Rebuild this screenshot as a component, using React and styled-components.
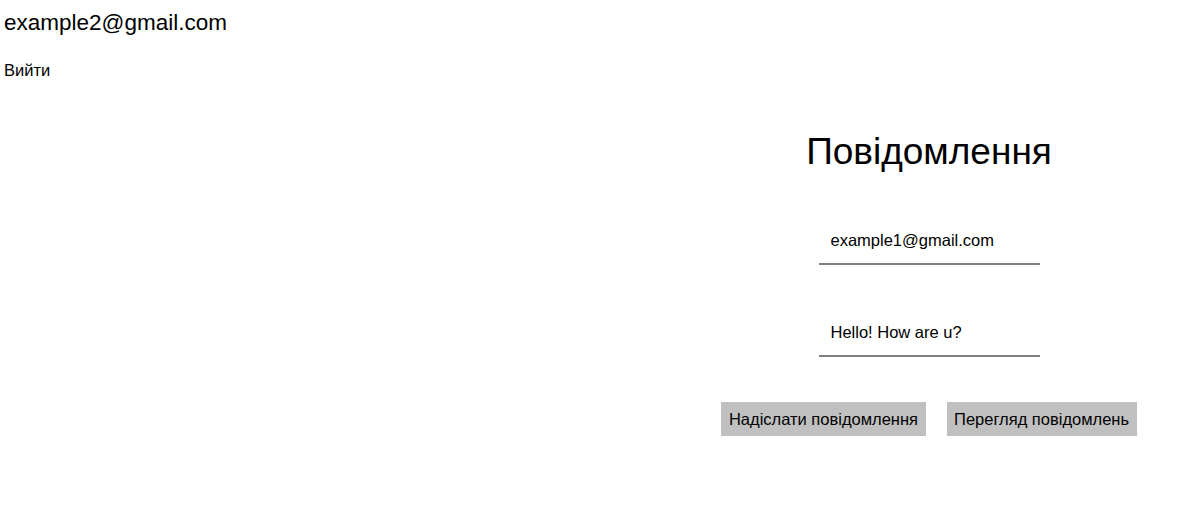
import React from "react";
import styled, { createGlobalStyle } from "styled-components";

const Global = createGlobalStyle`
  html, body { margin: 0; padding: 0; background: #fff; }
  body { font-family: "Liberation Sans", Arial, sans-serif; color: #000; }
`;

const Page = styled.div`
  display: flex;
  flex-direction: column;
`;

const Header = styled.header`
  display: flex;
  flex-direction: column;
  align-items: flex-start;
  padding: 9px 4px 0;
`;

const UserEmail = styled.div`
  font-size: 22.5px;
  line-height: 28px;
`;

const Logout = styled.button`
  margin-top: 23px;
  padding: 0;
  border: none;
  background: none;
  font-family: inherit;
  font-size: 16.5px;
  line-height: 20px;
  color: #000;
  cursor: pointer;
`;

const Main = styled.main`
  display: flex;
  justify-content: flex-end;
`;

const Panel = styled.section`
  width: 504px;
  display: flex;
  flex-direction: column;
  align-items: center;
`;

const Title = styled.h1`
  margin: 50px 0 0;
  font-size: 37px;
  font-weight: normal;
  line-height: 44px;
`;

const Field = styled.input`
  width: 221px;
  box-sizing: border-box;
  margin-top: ${(p) => p.$gap}px;
  padding: 9px 12px 13px;
  border: none;
  border-bottom: 2px solid #808080;
  outline: none;
  font-family: inherit;
  font-size: 16.5px;
  line-height: 20px;
  color: #000;
  background: transparent;
`;

const Actions = styled.div`
  display: flex;
  gap: 21px;
  margin-top: 45px;
`;

const ActionButton = styled.button`
  height: 34px;
  padding: 0 7.5px;
  border: none;
  background: #c0c0c0;
  font-family: inherit;
  font-size: 16.5px;
  color: #000;
  cursor: pointer;
`;

export default function App() {
  return (
    <Page>
      <Global />
      <Header>
        <UserEmail>example2@gmail.com</UserEmail>
        <Logout>Вийти</Logout>
      </Header>
      <Main>
        <Panel>
          <Title>Повідомлення</Title>
          <Field $gap={47} defaultValue="example1@gmail.com" />
          <Field $gap={48} defaultValue="Hello! How are u?" />
          <Actions>
            <ActionButton>Надіслати повідомлення</ActionButton>
            <ActionButton>Перегляд повідомлень</ActionButton>
          </Actions>
        </Panel>
      </Main>
    </Page>
  );
}
